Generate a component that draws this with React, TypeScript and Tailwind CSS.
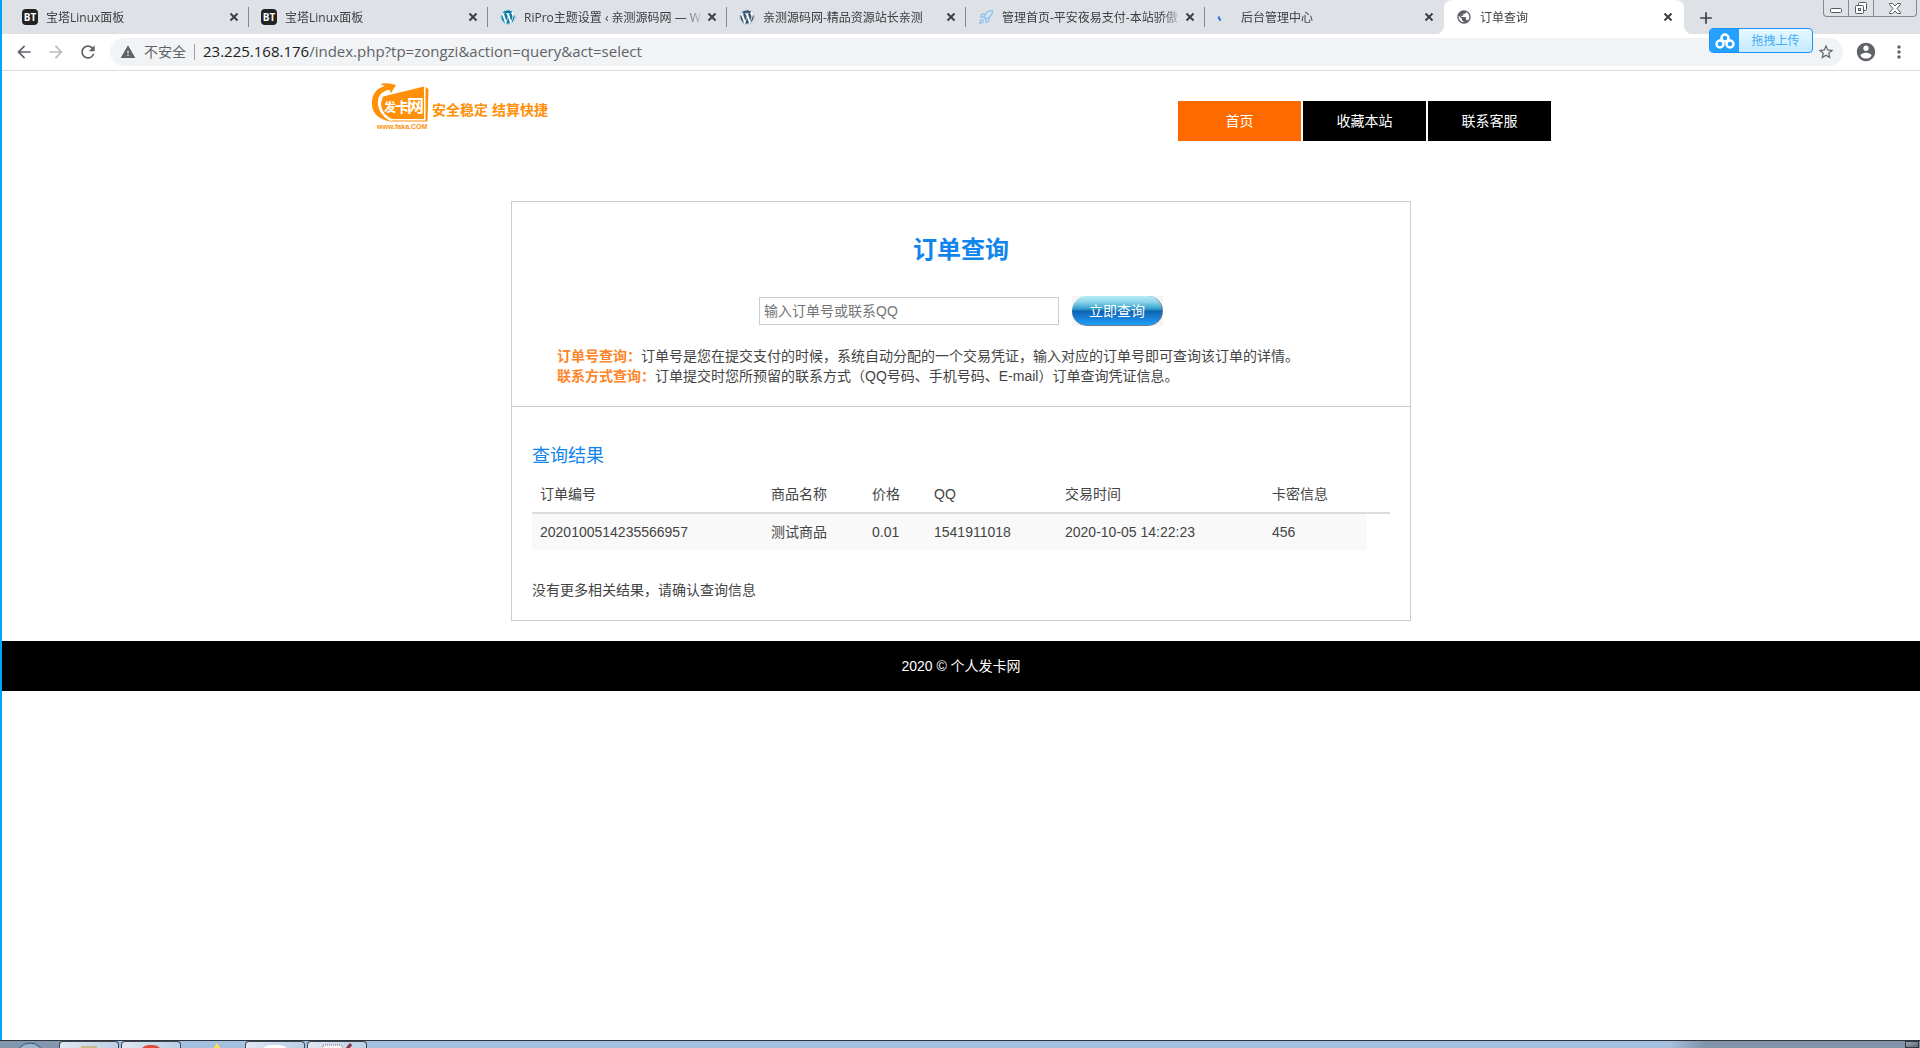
import { Rocket } from "lucide-react";
import { FaWordpress } from "react-icons/fa";
import { MdAdd, MdArrowBack, MdArrowForward, MdMoreVert, MdPublic, MdRefresh, MdStarBorder, MdWarning } from "react-icons/md";
import type { ReactNode } from "react";

type BrowserTab = {
  title: string;
  icon: ReactNode;
};

type Order = {
  id: string;
  product: string;
  price: string;
  qq: string;
  time: string;
  card: string;
};

function BtIcon() {
  return <span className="flex size-4 items-center justify-center rounded-sm bg-[#222] text-[10px] font-bold leading-none text-white">BT</span>;
}

function LoadingIcon() {
  return (
    <svg viewBox="0 0 16 16" className="size-4">
      <path d="M1.6 7.5 Q2 10 3.6 11.6" fill="none" stroke="#1a73e8" strokeWidth="2" />
    </svg>
  );
}

const tabs: BrowserTab[] = [
  { title: "宝塔Linux面板", icon: <BtIcon /> },
  { title: "宝塔Linux面板", icon: <BtIcon /> },
  { title: "RiPro主题设置 ‹ 亲测源码网 — W", icon: <FaWordpress className="size-4 rounded-full bg-white text-[#0e7aa8]" /> },
  { title: "亲测源码网-精品资源站长亲测", icon: <FaWordpress className="size-4 rounded-full bg-white text-[#3d5a75]" /> },
  { title: "管理首页-平安夜易支付-本站骄傲", icon: <Rocket className="size-4 text-[#8cc4ee]" strokeWidth={2} /> },
  { title: "后台管理中心", icon: <LoadingIcon /> },
];

const navItems = ["首页", "收藏本站", "联系客服"];

const orders: Order[] = [
  { id: "2020100514235566957", product: "测试商品", price: "0.01", qq: "1541911018", time: "2020-10-05 14:22:23", card: "456" },
];

function TabContent({ title, icon }: BrowserTab) {
  return (
    <>
      <span className="flex size-4 shrink-0 items-center justify-center">{icon}</span>
      <span className="ml-2 grow overflow-hidden whitespace-nowrap pt-px [mask-image:linear-gradient(to_right,black_88%,transparent)]">{title}</span>
      <button aria-label="关闭" className="shrink-0 text-[#3c4043]">
        <svg viewBox="0 0 14 14" className="size-[14px]" stroke="currentColor" strokeWidth="2">
          <path d="M3.500 3.500l7 7M10.500 3.500l-7 7" />
        </svg>
      </button>
    </>
  );
}

function WindowControls() {
  return (
    <div className="mr-[3px] flex h-[17px] rounded-b border border-t-0 border-[#85898f] text-[#55595e]">
      <button aria-label="最小化" className="flex w-[25px] items-end justify-center border-r border-[#85898f] pb-[3px]">
        <svg viewBox="0 0 12 5" className="h-[5px] w-3">
          <rect x="0.5" y="0.5" width="11" height="4" rx="1" fill="#fff" stroke="currentColor" />
        </svg>
      </button>
      <button aria-label="还原" className="flex w-[25px] items-center justify-center border-r border-[#85898f]">
        <svg viewBox="0 0 14 14" className="size-[14px]" fill="#fff" stroke="currentColor">
          <rect x="4.5" y="1.5" width="8" height="8" rx="1" />
          <rect x="1.5" y="4.5" width="8" height="8" rx="1" />
          <rect x="4.5" y="7.5" width="2" height="2" />
        </svg>
      </button>
      <button aria-label="关闭窗口" className="flex w-[42px] items-center justify-center">
        <svg viewBox="0 0 12 11" className="h-[11px] w-3" fill="#fff" stroke="currentColor">
          <path d="M.5 .5h3L6 3 8.500 .5h3v1L8 5.500l3.500 4v1h-3L6 8l-2.500 2.500h-3v-1L4 5.500l-3.500-4z" />
        </svg>
      </button>
    </div>
  );
}

function TabStrip() {
  return (
    <div className="flex h-[34px] bg-white text-xs text-[#3c4043]">
      <div className="flex min-w-0 rounded-br-lg bg-[#dee1e6] pb-1 pl-2">
        {tabs.map((tab, index) => (
          <div key={index} className="flex w-[239px] shrink items-center">
            <div className="flex h-full min-w-0 grow items-center pl-3 pr-[7px] pt-1">
              <TabContent {...tab} />
            </div>
            <span className={index < tabs.length - 1 ? "mt-1 h-5 w-px bg-[#85898f]" : "w-px"} />
          </div>
        ))}
      </div>
      <div className="w-[240px] shrink bg-[#dee1e6]">
        <div className="flex h-full items-center rounded-t-lg bg-white pl-3 pr-[9px]">
          <TabContent title="订单查询" icon={<MdPublic className="size-4 text-[#5f6368]" />} />
        </div>
      </div>
      <div className="flex grow items-start justify-between rounded-bl-lg bg-[#dee1e6]">
        <button aria-label="新标签页" className="ml-3 mt-2 text-[#3c4043]">
          <MdAdd className="size-5" />
        </button>
        <WindowControls />
      </div>
    </div>
  );
}

function UploadBadge() {
  return (
    <button className="absolute right-[107px] top-7 flex h-[25px] w-[104px] items-stretch overflow-hidden rounded border border-[#1c92fa] bg-linear-to-b from-[#e6f7ff] to-[#c3ecff] text-xs text-[#45acf5]">
      <span className="flex w-[29px] items-center justify-center bg-[#24a0ff]">
        <svg viewBox="0 0 20 16" className="h-4 w-5" fill="none" stroke="#fff" strokeWidth="2.500">
          <circle cx="10" cy="5" r="3.500" />
          <circle cx="5" cy="11" r="3.500" />
          <circle cx="15" cy="11" r="3.500" />
        </svg>
      </span>
      <span className="flex grow items-center justify-center pt-px">拖拽上传</span>
    </button>
  );
}

function AccountIcon() {
  return (
    <svg viewBox="0 0 24 24" className="size-[22px]" fill="currentColor">
      <path d="M12 2C6.480 2 2 6.480 2 12s4.480 10 10 10 10-4.480 10-10S17.520 2 12 2zm0 3c1.660 0 3 1.340 3 3s-1.340 3-3 3-3-1.340-3-3 1.340-3 3-3zm0 14.200c-2.500 0-4.710-1.280-6-3.220.030-1.990 4-3.080 6-3.080 1.990 0 5.970 1.090 6 3.080-1.290 1.940-3.500 3.220-6 3.220z" />
    </svg>
  );
}

function Toolbar() {
  return (
    <div className="flex h-[37px] items-center border-b border-[#dadce0] bg-white pl-3 pr-[11px] text-[#5f6368]">
      <button aria-label="后退"><MdArrowBack className="size-5" /></button>
      <button aria-label="前进" className="ml-3 text-[#babcbe]"><MdArrowForward className="size-5" /></button>
      <button aria-label="重新加载" className="ml-3"><MdRefresh className="size-5" /></button>
      <div className="ml-3 flex h-7 grow items-center rounded-full bg-[#f1f3f4] pl-[10px] pr-2 text-sm">
        <MdWarning className="size-4 shrink-0" />
        <span className="ml-2">不安全</span>
        <span className="ml-2 h-4 w-px bg-[#9aa0a6]" />
        <span className="ml-2 grow whitespace-nowrap text-[15px]">
          <span className="text-[#202124]">23.225.168.176</span>/index.php?tp=zongzi&amp;action=query&amp;act=select
        </span>
        <button aria-label="收藏"><MdStarBorder className="size-[18px]" /></button>
      </div>
      <button aria-label="用户" className="ml-3"><AccountIcon /></button>
      <button aria-label="菜单" className="ml-3"><MdMoreVert className="size-5" /></button>
    </div>
  );
}

function Logo() {
  return (
    <a href="#" className="mt-[10px] flex items-center text-[#ff9008]">
      <svg viewBox="0 0 60 50" className="h-[50px] w-[60px]" fill="currentColor">
        <path d="M12 15.500 L53 5.500 L53 38 L21 38 C14 35 10 29 10 22 Z" />
        <path d="M54.500 6 L57.500 8 L56.500 40.500 L19 40.500 L19 39.500 L54.500 39.500 Z" />
        <path d="M9 3 Q16 1 25 4 L20 12 L18 9 C10 10 6 16 7 24 C8 31 13 37 20 40.500 C8 39 0 32 1 21 C1 13 6 7 14 5 Z" />
        <path d="M19 9.500 C11 11 7.500 17 8.500 24 C10 31 14 36 21 39.500" fill="none" stroke="#fff" strokeWidth="1.500" />
        <g fill="#fff" fontWeight="700">
          <text x="13" y="31" fontSize="12">发</text>
          <text x="24" y="31" fontSize="14">卡</text>
          <text x="36" y="31" fontSize="17">网</text>
        </g>
        <text x="6" y="48" fontSize="7" fontWeight="700">www.faka.COM</text>
      </svg>
      <span className="mt-2 whitespace-nowrap pl-px text-sm font-bold">安全稳定 结算快捷</span>
    </a>
  );
}

function SiteHeader() {
  return (
    <header className="mx-auto flex h-[130px] w-full max-w-[1180px] items-start justify-between">
      <Logo />
      <nav className="mt-[30px] flex gap-[2px] text-sm text-white">
        {navItems.map((item, index) => (
          <a
            key={item}
            href="#"
            className={`flex h-10 w-[123px] items-center justify-center ${index === 0 ? "bg-[#ff6a00]" : "bg-black"}`}
          >
            {item}
          </a>
        ))}
      </nav>
    </header>
  );
}

function QuerySection() {
  return (
    <section className="border-b border-[#ccc] pb-5 pt-8">
      <h1 className="text-center text-2xl font-bold leading-8 text-[#1284ed]">订单查询</h1>
      <form className="mt-[30px] flex items-center justify-center gap-[13px]" onSubmit={event => event.preventDefault()}>
        <input
          type="text"
          aria-label="输入订单号或联系QQ"
          placeholder="输入订单号或联系QQ"
          className="h-7 w-[300px] border border-[#ccc] px-1 text-sm placeholder:text-[#757575]"
        />
        <span className="bg-[#f5f5f5]">
          <button
            type="submit"
            className="block h-[30px] w-[91px] rounded-full border-b border-r border-[#6b7a8c] bg-[linear-gradient(to_bottom,#b5ecf6_0%,#8fd6ea_20%,#2f9dcb_45%,#0f62b0_52%,#1678cc_70%,#1fa0fa_100%)] text-sm leading-7 text-white"
          >
            立即查询
          </button>
        </span>
      </form>
      <div className="mt-5 px-[45px] leading-5">
        <p><b className="text-[#ff8427]">订单号查询：</b>订单号是您在提交支付的时候，系统自动分配的一个交易凭证，输入对应的订单号即可查询该订单的详情。</p>
        <p><b className="text-[#ff8427]">联系方式查询：</b>订单提交时您所预留的联系方式（QQ号码、手机号码、E-mail）订单查询凭证信息。</p>
      </div>
    </section>
  );
}

function ResultSection() {
  return (
    <section className="px-5 pb-5 pt-[35px]">
      <h2 className="mb-[6px] text-lg leading-7 text-[#1284ed]">查询结果</h2>
      <table className="w-full table-fixed border-separate border-spacing-0 text-left leading-5">
        <colgroup>
          <col className="w-[231px]" />
          <col className="w-[101px]" />
          <col className="w-[62px]" />
          <col className="w-[131px]" />
          <col className="w-[207px]" />
          <col className="w-[103px]" />
          <col />
        </colgroup>
        <thead>
          <tr>
            {["订单编号", "商品名称", "价格", "QQ", "交易时间", "卡密信息", ""].map(label => (
              <th key={label} className="border-b-2 border-[#ddd] p-2 font-normal">{label}</th>
            ))}
          </tr>
        </thead>
        <tbody>
          {orders.map(({ id, product, price, qq, time, card }) => (
            <tr key={id}>
              {[id, product, price, qq, time, card].map(value => (
                <td key={value} className="bg-[#f9f9f9] p-2">{value}</td>
              ))}
            </tr>
          ))}
        </tbody>
      </table>
      <p className="mt-[30px] leading-5">没有更多相关结果，请确认查询信息</p>
    </section>
  );
}

function TaskbarItem({ children }: { children: ReactNode }) {
  return (
    <div className="flex h-full w-[60px] justify-center rounded-t border-x border-t border-[#3b4654] bg-linear-to-r from-[#dfe7f0] to-[#bccfe4]">
      {children}
    </div>
  );
}

function Taskbar() {
  return (
    <div className="flex h-2 overflow-hidden border-t border-[#30343b] bg-[linear-gradient(to_right,#8296ad_0,#8296ad_60px,#a5bfde_61px,#a5bfde_calc(100%_-_250px),#8093a9_calc(100%_-_215px))]">
      <div className="flex w-[59px] justify-center">
        <svg viewBox="0 0 30 8" className="h-2 w-[30px]">
          <circle cx="15" cy="16" r="14" fill="#9bb4c9" stroke="#28557c" />
        </svg>
      </div>
      <TaskbarItem><span className="mt-1 h-2 w-4 bg-[#c9b98b]" /></TaskbarItem>
      <div className="ml-[2px]">
        <TaskbarItem><span className="mt-[3px] h-5 w-6 rounded-full bg-[#e04a3f]" /></TaskbarItem>
      </div>
      <div className="flex w-[64px] justify-center pl-2">
        <svg viewBox="0 0 12 8" className="h-2 w-3"><path d="M6 2 L10 8 H2 Z" fill="#ffe14d" /></svg>
      </div>
      <TaskbarItem><span className="mt-[3px] h-6 w-8 rounded-full bg-white" /></TaskbarItem>
      <div className="ml-[2px]">
        <TaskbarItem>
          <svg viewBox="0 0 32 8" className="h-2 w-8">
            <path d="M2 9 V3 H20 L24 9" fill="#f4f4f4" stroke="#777" strokeDasharray="1 1" />
            <path d="M26 7 L30 2" stroke="#8a3040" strokeWidth="3" />
          </svg>
        </TaskbarItem>
      </div>
      <div className="ml-auto mr-px w-[14px] border border-[#2f3944] bg-linear-to-br from-[#a0a8b0] to-[#5c656f]" />
    </div>
  );
}

export default function App() {
  return (
    <div className="flex min-h-screen flex-col bg-white">
      <div className="flex grow flex-col border-l-2 border-[#00a2ff]">
        <div className="relative font-['Open_Sans','Noto_Sans_CJK_SC',sans-serif]">
          <TabStrip />
          <Toolbar />
          <UploadBadge />
        </div>
        <div className="font-['Liberation_Sans','Noto_Sans_CJK_SC',sans-serif] text-sm text-[#444]">
          <SiteHeader />
          <main className="mx-auto w-full max-w-[900px] border border-[#ccc]">
            <QuerySection />
            <ResultSection />
          </main>
          <footer className="mt-5 flex h-[50px] items-center justify-center bg-black text-white">
            2020 © 个人发卡网
          </footer>
        </div>
      </div>
      <Taskbar />
    </div>
  );
}
